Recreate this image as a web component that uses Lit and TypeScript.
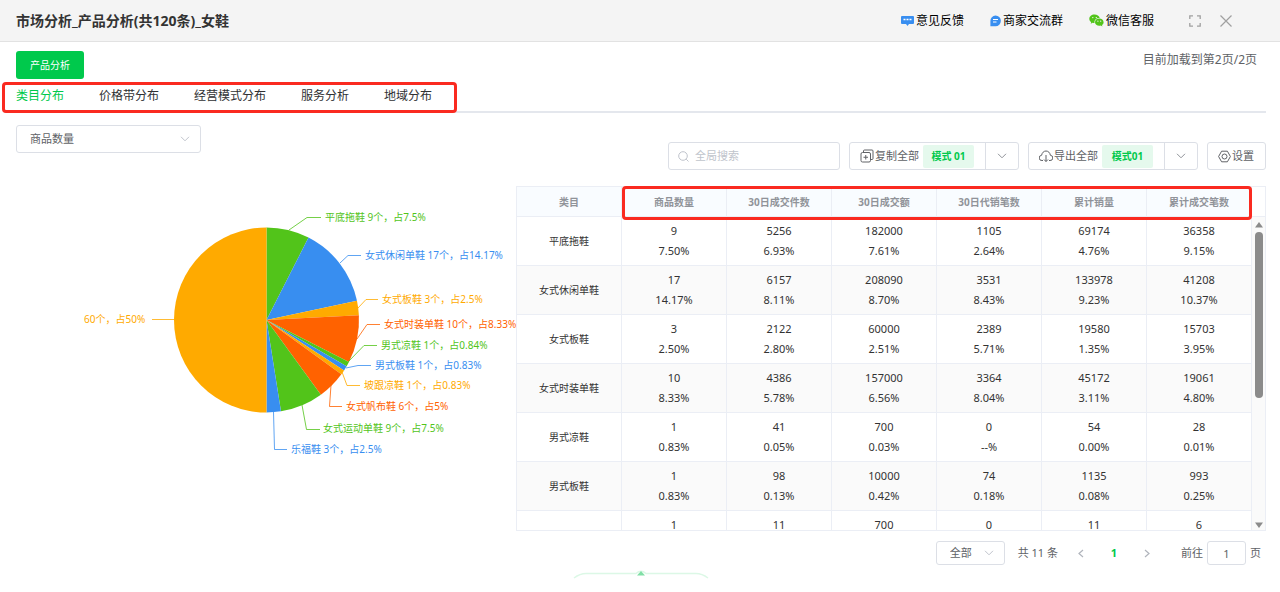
import { LitElement, html, svg, css } from "lit";
import { customElement, state } from "lit/decorators.js";
import { classMap } from "lit/directives/class-map.js";

const GREEN = "#52c41a";
const BLUE = "#388ef0";
const AMBER = "#ffaa00";
const ORANGE = "#ff6200";

interface Slice {
  name: string;
  count: number;
  share: string;
  color: string;
  line: string;
  x: number;
  y: number;
}

const slices: Slice[] = [
  { name: "平底拖鞋", count: 9, share: "7.5%", color: GREEN, line: "289,230 307,217.5 321,217.5", x: 325, y: 217 },
  { name: "女式休闲单鞋", count: 17, share: "14.17%", color: BLUE, line: "340,263 348,255.5 361,255.5", x: 365, y: 255 },
  { name: "女式板鞋", count: 3, share: "2.5%", color: AMBER, line: "358,308 366,299.5 378,299.5", x: 382, y: 299 },
  { name: "女式时装单鞋", count: 10, share: "8.33%", color: ORANGE, line: "357,339 367,324.5 380,324.5", x: 384, y: 324 },
  { name: "男式凉鞋", count: 1, share: "0.84%", color: GREEN, line: "348,362 364,345.5 377,345.5", x: 381, y: 345 },
  { name: "男式板鞋", count: 1, share: "0.83%", color: BLUE, line: "346,368 358,365.5 371,365.5", x: 375, y: 365 },
  { name: "坡跟凉鞋", count: 1, share: "0.83%", color: AMBER, line: "342,372 347,385.5 360,385.5", x: 364, y: 385 },
  { name: "女式帆布鞋", count: 6, share: "5%", color: ORANGE, line: "331,385 329.5,406.5 342,406.5", x: 346, y: 406 },
  { name: "女式运动单鞋", count: 9, share: "7.5%", color: GREEN, line: "302,405 306.5,429.5 320,429.5", x: 323, y: 428 },
  { name: "乐福鞋", count: 3, share: "2.5%", color: BLUE, line: "273.5,412 274.5,449.5 287,449.5", x: 291, y: 449 },
  { name: "", count: 60, share: "50%", color: AMBER, line: "174,319.5 152,319.5", x: 84, y: 319 },
];

const columns = ["类目", "商品数量", "30日成交件数", "30日成交额", "30日代销笔数", "累计销量", "累计成交笔数"];

const rows: [string, ...[string, string][]][] = [
  ["平底拖鞋", ["9", "7.50%"], ["5256", "6.93%"], ["182000", "7.61%"], ["1105", "2.64%"], ["69174", "4.76%"], ["36358", "9.15%"]],
  ["女式休闲单鞋", ["17", "14.17%"], ["6157", "8.11%"], ["208090", "8.70%"], ["3531", "8.43%"], ["133978", "9.23%"], ["41208", "10.37%"]],
  ["女式板鞋", ["3", "2.50%"], ["2122", "2.80%"], ["60000", "2.51%"], ["2389", "5.71%"], ["19580", "1.35%"], ["15703", "3.95%"]],
  ["女式时装单鞋", ["10", "8.33%"], ["4386", "5.78%"], ["157000", "6.56%"], ["3364", "8.04%"], ["45172", "3.11%"], ["19061", "4.80%"]],
  ["男式凉鞋", ["1", "0.83%"], ["41", "0.05%"], ["700", "0.03%"], ["0", "--%"], ["54", "0.00%"], ["28", "0.01%"]],
  ["男式板鞋", ["1", "0.83%"], ["98", "0.13%"], ["10000", "0.42%"], ["74", "0.18%"], ["1135", "0.08%"], ["993", "0.25%"]],
  ["坡跟凉鞋", ["1", "0.83%"], ["11", "0.01%"], ["700", "0.03%"], ["0", "--%"], ["11", "0.00%"], ["6", "0.00%"]],
];

const chevron = html`<svg class="chevron" width="10" height="6" viewBox="0 0 10 6" aria-hidden="true">
  <path d="M1 .8 5 4.8 9 .8" fill="none" stroke="currentColor" />
</svg>`;

@customElement("category-pie")
class CategoryPie extends LitElement {
  static styles = css`
    :host { display: block; }
    .chart { display: block; width: 100%; height: 310px; overflow: hidden; }
    .label { font: 10px "Noto Sans", "Noto Sans CJK SC", sans-serif; dominant-baseline: central; }
  `;

  render() {
    const cx = 266.5, cy = 320, r = 92.5;
    const total = slices.reduce((sum, s) => sum + s.count, 0);
    let seen = 0;
    const point = (n: number) => {
      const a = (n / total) * Math.PI * 2;
      return `${cx + r * Math.sin(a)} ${cy - r * Math.cos(a)}`;
    };
    return html`<svg class="chart" viewBox="16 153 500 310" role="img" aria-label="商品数量">
      ${slices.map((s) => {
        const start = point(seen);
        seen += s.count;
        return svg`<path d="M${cx} ${cy}L${start}A${r} ${r} 0 0 1 ${point(seen)}Z" fill=${s.color} />`;
      })}
      ${slices.map((s) => svg`
        <polyline points=${s.line} fill="none" stroke=${s.color} stroke-opacity=".8" />
        <text class="label" x=${s.x} y=${s.y} fill=${s.color}>${s.name ? s.name + " " : ""}${s.count}个，占${s.share}</text>`)}
    </svg>`;
  }
}

@customElement("app-root")
class AppRoot extends LitElement {
  @state() tab = 0;

  static styles = css`
    :host {
      display: block;
      min-height: 100vh;
      background: #fff;
      color: #606266;
      font: 11px/18px "Noto Sans", "Noto Sans CJK SC", sans-serif;
    }
    * { box-sizing: border-box; }
    button, input, select { font: inherit; color: inherit; margin: 0; padding: 0; border: 0; background: none; }
    svg { flex: none; display: block; }

    .header {
      display: flex; align-items: center; height: 42px; padding: 0 48px 0 16px;
      background: #f4f4f4; border-bottom: 1px solid #e2e2e2; color: #000; font-size: 12px;
    }
    .title { flex: 1; margin: 0; font-size: 14px; font-weight: 700; color: #333; }
    .links { display: flex; gap: 26px; }
    .link { display: flex; align-items: center; gap: 2px; color: inherit; text-decoration: none; }
    .tools { display: flex; align-items: center; gap: 19px; margin-left: 35px; color: #a0a0a0; }

    .main { padding: 9px 14px 0 16px; }
    .top { display: flex; justify-content: space-between; align-items: flex-start; padding-right: 9px; font-size: 12px; }
    .primary { height: 28px; padding: 0 14px; border-radius: 3px; background: #00c94c; color: #fff; font-size: 10px; }
    .tabs { position: relative; display: flex; gap: 35px; border-bottom: 2px solid #e4e7ed; height: 34px; }
    .tab { font-size: 12px; padding-top: 2px; color: #303133; }
    .tab.active { color: #00c94c; }
    .mark { position: absolute; border: 3px solid #fa2a20; border-radius: 4px; pointer-events: none; }
    .mark-tabs { left: -14px; top: 3px; width: 455px; height: 31px; }
    .mark-head { left: 105px; right: 13px; top: -1px; height: 34px; }

    .content { display: grid; grid-template-columns: 2fr 3fr; }
    .left { padding-top: 12px; min-width: 0; }
    .right { padding-top: 29px; min-width: 0; }
    .box { display: inline-flex; align-items: center; border: 1px solid #dcdfe6; border-radius: 3px; height: 28px; background: #fff; }
    .picker { position: relative; }
    .picker select { appearance: none; width: 100%; height: 100%; padding: 0 13px; outline: none; }
    .picker .chevron { position: absolute; right: 10px; color: #c0c4cc; pointer-events: none; }
    .metric { display: flex; width: 185px; }

    .toolbar { display: flex; justify-content: flex-end; gap: 9px; margin-bottom: 16px; }
    .search { width: 172px; padding: 0 9px; gap: 6px; color: #c0c4cc; }
    .search input { width: 100%; outline: none; color: #606266; }
    .search input::placeholder { color: #c0c4cc; opacity: 1; }
    .action { display: flex; align-items: center; height: 26px; padding: 0 11px 0 10px; }
    .action svg { margin-right: 1px; }
    .tag { margin-left: 4px; height: 23px; width: 51px; line-height: 23px; border-radius: 2px; background: #e5f9ed; color: #00c94c; font-size: 10px; font-weight: 700; text-align: center; }
    .more { display: flex; align-items: center; justify-content: center; width: 33px; height: 26px; border-left: 1px solid #dcdfe6; color: #909399; }

    .grid { position: relative; display: flex; height: 345px; border: 1px solid #ebeef5; }
    .viewport { flex: 1; overflow: hidden; }
    table { width: 100%; table-layout: fixed; border-collapse: separate; border-spacing: 0; color: #333; text-align: center; }
    th, td { padding: 0; border-right: 1px solid #ebeef5; border-bottom: 1px solid #ebeef5; }
    th { height: 30px; background: #f9fcff; color: #909399; font-size: 10px; font-weight: 700; }
    td { height: 49px; line-height: 20px; }
    .name { font-size: 10px; font-weight: 400; color: #333; background: none; }
    .odd { background: #fafafa; }
    .gutter { display: flex; flex-direction: column; align-items: center; width: 13px; color: #8b8b8b; background: #fafafa; padding-bottom: 2px; }
    .corner { width: 100%; height: 30px; border-bottom: 1px solid #ebeef5; background: #fff; margin-bottom: 5px; }
    .thumb { width: 8px; height: 166px; margin-top: 4px; border-radius: 4px; background: #8b8b8b; }
    .down { margin-top: auto; }

    .pager { display: flex; align-items: center; justify-content: flex-end; margin-top: 10px; padding-right: 5px; }
    .pager .box { height: 24px; }
    .size { width: 69px; margin-right: 13px; }
    .step { width: 20px; height: 24px; display: flex; align-items: center; justify-content: center; color: #b0b4bc; }
    .total { margin-right: 13px; }
    .page { width: 46px; height: 24px; color: #00c94c; font-weight: 700; }
    .jump { display: flex; align-items: center; gap: 4px; margin-left: 24px; }
    .jump .box { width: 39px; text-align: center; outline: none; }
    .drawer { display: block; margin: 5px auto 0; }
  `;

  render() {
    const tabs = ["类目分布", "价格带分布", "经营模式分布", "服务分析", "地域分布"];
    return html`
      <header class="header">
        <h1 class="title">市场分析_产品分析(共120条)_女鞋</h1>
        <nav class="links">
          <a class="link" href="#feedback">
            <svg width="13" height="12" viewBox="0 0 13 12"><path d="M1 1h11q1 0 1 1v6q0 1-1 1H8L6.500 11 5 9H1Q0 9 0 8V2q0-1 1-1Z" fill="#388ef0" /><path d="M2.500 4.500h2m1 0h2m1 0h2" stroke="#fff" stroke-width="1.300" /></svg>意见反馈</a>
          <a class="link" href="#group">
            <svg width="11" height="12" viewBox="0 0 11 12"><path d="M5.500.5a5.300 5.300 0 1 1 0 10.700H.4V6A5.300 5.300 0 0 1 5.500.5Z" fill="#388ef0" /><path d="M3 4.500h5M3 7h3.500" stroke="#fff" /></svg>商家交流群</a>
          <a class="link" href="#service">
            <svg width="15" height="13" viewBox="0 0 15 13"><path d="M5.500.5C2.500.5.3 2.400.3 4.800c0 1.400.7 2.500 1.900 3.300l-.5 1.600 1.900-1c.6.2 1.200.2 1.900.2C5.200 5.700 7.600 3.800 10.700 4 10.200 2 8.100.5 5.500.5Z" fill="#52c41a" /><path d="M10.300 4.600C7.800 4.600 6 6.200 6 8.200s1.900 3.600 4.300 3.600c.6 0 1-.1 1.500-.2l1.600.8-.4-1.300c1-.7 1.600-1.700 1.600-2.900 0-2-1.900-3.600-4.300-3.600Z" fill="#52c41a" /><g fill="#f4f4f4"><circle cx="3.800" cy="3.600" r=".7" /><circle cx="7.300" cy="3.600" r=".7" /><circle cx="8.900" cy="7.200" r=".6" /><circle cx="11.700" cy="7.200" r=".6" /></g></svg>微信客服</a>
        </nav>
        <div class="tools">
          <button aria-label="全屏"><svg width="12" height="12" viewBox="0 0 12 12"><path d="M.8 4V.8H4M8 .8h3.200V4M11.200 8v3.200H8M4 11.200H.8V8" fill="none" stroke="currentColor" stroke-width="1.300" /></svg></button>
          <button aria-label="关闭"><svg width="12" height="12" viewBox="0 0 12 12"><path d="m.5.5 11 11m0-11-11 11" stroke="currentColor" stroke-width="1.200" /></svg></button>
        </div>
      </header>
      <main class="main">
        <div class="top">
          <button class="primary">产品分析</button>
          <span>目前加载到第2页/2页</span>
        </div>
        <nav class="tabs">
          ${tabs.map((t, i) => html`<button class=${classMap({ tab: true, active: i === this.tab })} @click=${() => (this.tab = i)}>${t}</button>`)}
          <div class="mark mark-tabs"></div>
        </nav>
        <div class="content">
          <section class="left">
            <div class="box picker metric"><select aria-label="指标"><option>商品数量</option></select>${chevron}</div>
            <category-pie></category-pie>
          </section>
          <section class="right">
            <div class="toolbar">
              <label class="box search">
                <svg width="11" height="11" viewBox="0 0 11 11"><circle cx="5" cy="5" r="4.300" fill="none" stroke="currentColor" /><path d="m8.200 8.200 2.300 2.300" stroke="currentColor" /></svg>
                <input type="text" placeholder="全局搜索" aria-label="全局搜索" />
              </label>
              <div class="box">
                <button class="action">
                  <svg width="14" height="14" viewBox="0 0 14 14" fill="none" stroke="currentColor"><rect x="1" y="3.500" width="9.500" height="9.500" rx="1.500" /><path d="M3.500 3.500V2q0-1 1-1H12q1 0 1 1v7.500q0 1-1 1h-1.500M5.750 6v4.500M3.500 8.250H8" /></svg>
                  复制全部<span class="tag">模式 01</span></button>
                <button class="more" aria-label="更多复制模式">${chevron}</button>
              </div>
              <div class="box">
                <button class="action">
                  <svg width="14" height="14" viewBox="0 0 14 14" fill="none" stroke="currentColor"><path d="M4 11.500H3A2.600 2.600 0 0 1 2.600 6.300C3 3.700 4.800 2 7 2s4 1.700 4.400 4.300A2.600 2.600 0 0 1 11 11.500h-1M7 6v6.500M5 10.500l2 2 2-2" /></svg>
                  导出全部<span class="tag">模式01</span></button>
                <button class="more" aria-label="更多导出模式">${chevron}</button>
              </div>
              <div class="box">
                <button class="action">
                  <svg width="13" height="13" viewBox="0 0 13 13" fill="none" stroke="currentColor"><path d="M3.600 1.200h5.800l3 5.300-3 5.300H3.600l-3-5.300Z" stroke-linejoin="round" /><circle cx="6.500" cy="6.500" r="2.500" /></svg>
                  设置</button>
              </div>
            </div>
            <div class="grid">
              <div class="viewport">
                <table>
                  <thead><tr>${columns.map((c) => html`<th scope="col">${c}</th>`)}</tr></thead>
                  <tbody>
                    ${rows.map(([name, ...cells], i) => html`<tr class=${classMap({ odd: i % 2 === 1 })}>
                      <th class="name" scope="row">${name}</th>
                      ${(cells as [string, string][]).map(([n, p]) => html`<td>${n}<br />${p}</td>`)}
                    </tr>`)}
                  </tbody>
                </table>
              </div>
              <div class="gutter">
                <div class="corner"></div>
                <svg width="8" height="6" viewBox="0 0 8 6"><path d="M4 0 8 5.500H0Z" fill="currentColor" /></svg>
                <div class="thumb"></div>
                <svg class="down" width="8" height="6" viewBox="0 0 8 6"><path d="M4 6 8 .5H0Z" fill="currentColor" /></svg>
              </div>
              <div class="mark mark-head"></div>
            </div>
            <div class="pager">
              <div class="box picker size"><select aria-label="每页条数"><option>全部</option></select>${chevron}</div>
              <span class="total">共 11 条</span>
              <button class="step" aria-label="上一页"><svg width="6" height="9" viewBox="0 0 6 9"><path d="M5 1 1 4.500 5 8" fill="none" stroke="currentColor" stroke-width="1.200" /></svg></button>
              <button class="page">1</button>
              <button class="step" aria-label="下一页"><svg width="6" height="9" viewBox="0 0 6 9"><path d="m1 1 4 3.500L1 8" fill="none" stroke="currentColor" stroke-width="1.200" /></svg></button>
              <div class="jump"><label for="page-no">前往</label><input id="page-no" class="box" type="text" value="1" /><span>页</span></div>
            </div>
          </section>
        </div>
        <svg class="drawer" width="136" height="10" viewBox="0 0 136 10">
          <path d="M1 8Q7 3.500 13 3.500H63Q68-1 73 3.500H123Q129 3.500 135 8" fill="none" stroke="#dcf8e6" stroke-width="1.500" />
          <path d="m68 1 4 4.500h-8Z" fill="#80dfa6" />
        </svg>
      </main>
    `;
  }
}
